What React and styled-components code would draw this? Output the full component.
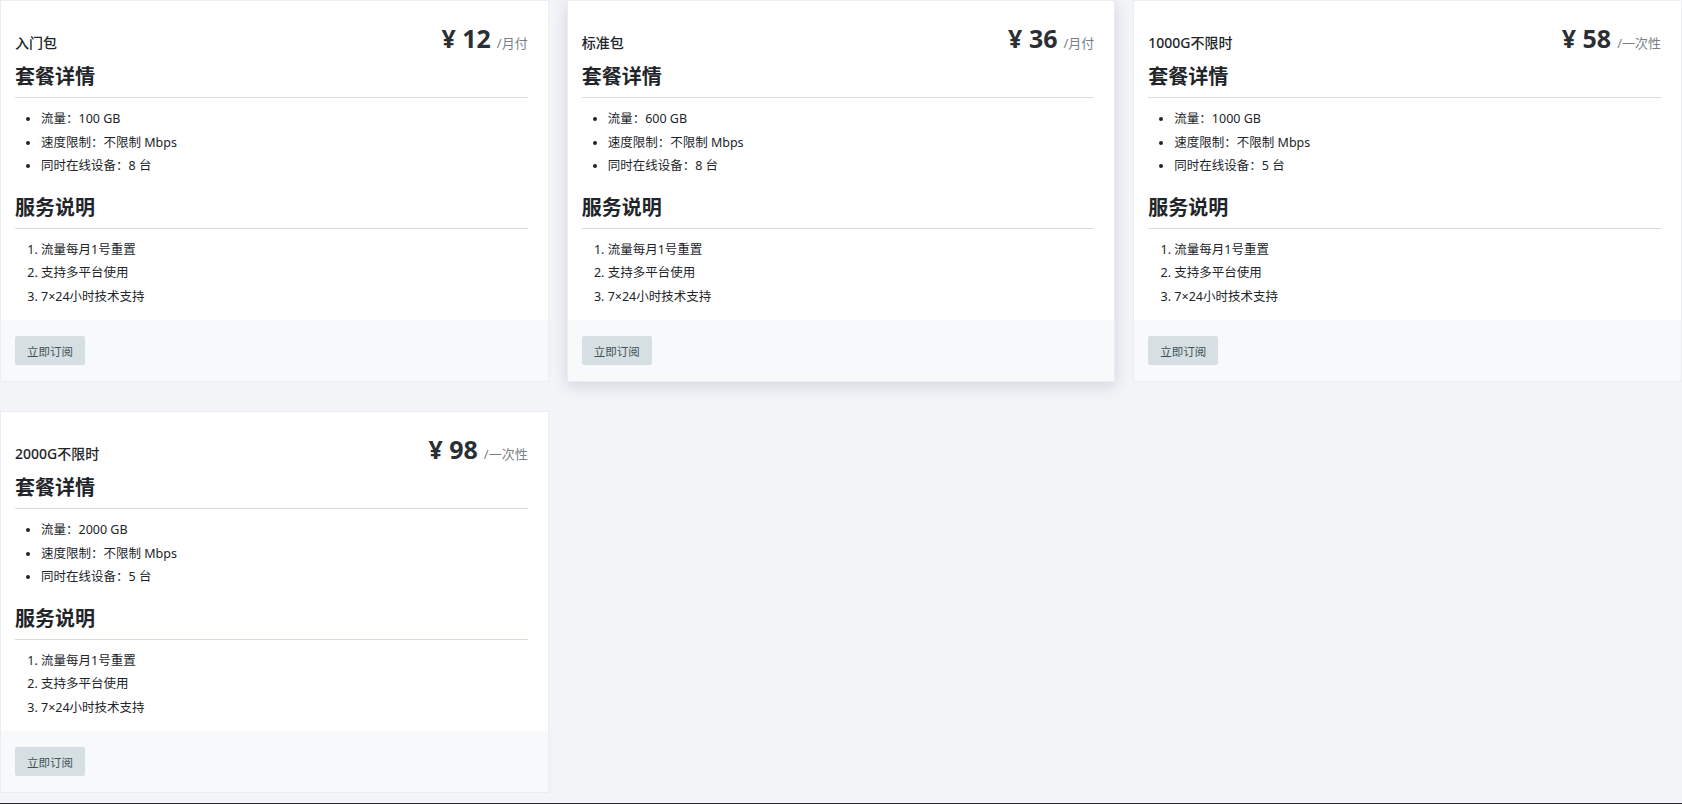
import React from 'react';
import styled, { createGlobalStyle } from 'styled-components';

const Global = createGlobalStyle`
  body {
    margin: 0;
    background: #f3f4f8;
    font-family: "Segoe UI", "Noto Sans", "Noto Sans CJK SC", sans-serif;
    color: #212529;
  }
`;

const Grid = styled.div`
  display: grid;
  grid-template-columns: repeat(3, 1fr);
  column-gap: 18px;
  row-gap: 19px;
  align-items: start;
  height: 803px;
  border-bottom: 1px solid #2a2a2a;
  box-sizing: content-box;
`;

const Card = styled.div`
  background: #fff;
  border: 1px solid #ebedf1;
  box-shadow: ${p => (p.raised ? '0 4px 14px rgba(40, 50, 80, 0.16)' : 'none')};
`;

const Body = styled.div`
  padding: 20px 20px 12px 14px;
`;

const Head = styled.div`
  display: flex;
  justify-content: space-between;
  align-items: baseline;
  height: 26px;
`;

const Name = styled.div`
  font-size: 14px;
  font-weight: 500;
`;

const Price = styled.div`
  font-size: 25px;
  font-weight: 700;
  color: #2b2f33;
  span {
    font-size: 13px;
    font-weight: 400;
    color: #7a7f86;
    margin-left: 6px;
  }
`;

const Section = styled.h3`
  margin: 16px 0 0;
  font-size: 20px;
  font-weight: 700;
  line-height: 28px;
  padding-bottom: 6px;
  border-bottom: 1px solid #d6dce3;
`;

const UList = styled.ul`
  margin: 9px 0 0;
  padding-left: 26px;
  font-size: 12.5px;
  line-height: 23.5px;
`;

const OList = styled.ol`
  margin: 9px 0 0;
  padding-left: 26px;
  font-size: 12.5px;
  line-height: 23.5px;
`;

const Footer = styled.div`
  background: #f8f9fb;
  padding: 16px 14px;
`;

const Button = styled.button`
  background: #d6e0e3;
  color: #3f5157;
  border: none;
  border-radius: 2px;
  font-family: inherit;
  font-size: 11.5px;
  height: 29px;
  padding: 0 12px;
`;

const plans = [
  { name: '入门包', price: 12, unit: '/月付', traffic: '100 GB', devices: 8 },
  { name: '标准包', price: 36, unit: '/月付', traffic: '600 GB', devices: 8, raised: true },
  { name: '1000G不限时', price: 58, unit: '/一次性', traffic: '1000 GB', devices: 5 },
  { name: '2000G不限时', price: 98, unit: '/一次性', traffic: '2000 GB', devices: 5 },
];

export default function App() {
  return (
    <>
      <Global />
      <Grid>
        {plans.map(p => (
          <Card key={p.name} raised={p.raised}>
            <Body>
              <Head>
                <Name>{p.name}</Name>
                <Price>¥ {p.price}<span>{p.unit}</span></Price>
              </Head>
              <Section>套餐详情</Section>
              <UList>
                <li>流量：{p.traffic}</li>
                <li>速度限制：不限制 Mbps</li>
                <li>同时在线设备：{p.devices} 台</li>
              </UList>
              <Section>服务说明</Section>
              <OList>
                <li>流量每月1号重置</li>
                <li>支持多平台使用</li>
                <li>7×24小时技术支持</li>
              </OList>
            </Body>
            <Footer>
              <Button>立即订阅</Button>
            </Footer>
          </Card>
        ))}
      </Grid>
    </>
  );
}
